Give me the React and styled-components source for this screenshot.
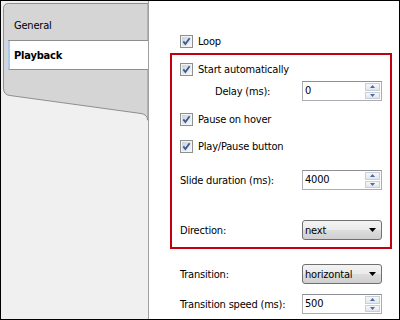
import React from 'react';
import styled, { createGlobalStyle } from 'styled-components';

const Global = createGlobalStyle`
  body {
    margin: 0;
    background: #fff;
  }
`;

const Frame = styled.div`
  width: 400px;
  height: 320px;
  box-sizing: border-box;
  border: 1px solid #000;
  display: flex;
  overflow: hidden;
  font-family: "DejaVu Sans Condensed", "Liberation Sans", sans-serif;
  font-size: 11px;
  letter-spacing: -0.2px;
  color: #000;
`;

/* left side: the tab strip */
const Sidebar = styled.div`
  position: relative;
  width: 147px;
  flex: none;
  background: #f0f0f0;
  border-right: 1px solid #a0a0a0;
  padding-top: 3px;
`;

const Backdrop = styled.svg`
  position: absolute;
  left: 0;
  top: 0;
`;

const TabList = styled.div`
  position: relative;
  margin-left: 7px;
`;

const Tab = styled.div`
  display: flex;
  align-items: center;
  box-sizing: border-box;
  height: ${(p) => (p.$active ? 29 : 37)}px;
  padding: ${(p) => (p.$active ? '0 0 0 4px' : '7px 0 0 6px')};
  border-bottom: 1px solid #8e8e8e;
  border-left: ${(p) => (p.$active ? '2px solid #a6cbf2' : 'none')};
  background: ${(p) => (p.$active ? '#fff' : 'transparent')};
  font-weight: ${(p) => (p.$active ? 'bold' : 'normal')};
  line-height: 13px;
`;

/* right side: the settings */
const Content = styled.div`
  flex: 1;
  background: #fff;
  padding: 30px 0 0 21px;
`;

const Row = styled.div`
  display: flex;
  align-items: center;
  height: 20px;
  margin-top: ${(p) => p.$gap || 0}px;
  padding-left: ${(p) => (p.$outside ? 10 : 0)}px;
`;

const Highlight = styled.div`
  box-sizing: border-box;
  width: 222px;
  margin-top: 2px;
  border: 2px solid #c3000d;
  padding: 4px 0 7px 8px;
`;

const Label = styled.span`
  width: ${(p) => (p.$indent ? 87 : 122)}px;
  padding-left: ${(p) => (p.$indent ? 35 : 0)}px;
  white-space: nowrap;
`;

const CheckLabel = styled.label`
  display: flex;
  align-items: center;
  gap: 5px;
  white-space: nowrap;
`;

const Spin = styled.div`
  box-sizing: border-box;
  width: 80px;
  height: 20px;
  display: flex;
  border: 1px solid #abadb3;
  border-top-color: #8c8f96;
  background: #fff;
`;

const SpinValue = styled.span`
  flex: 1;
  padding-left: 2px;
  line-height: 18px;
`;

const SpinButtons = styled.div`
  width: 15px;
  display: flex;
  flex-direction: column;
  gap: 1px;
  padding: 1px 1px 1px 0;
`;

const SpinButton = styled.div`
  flex: 1;
  display: flex;
  align-items: center;
  justify-content: center;
  box-sizing: border-box;
  border: 1px solid #c9cfd7;
  background: linear-gradient(#f6f7f9, #e2e6ec);
`;

const Select = styled.div`
  box-sizing: border-box;
  width: 80px;
  height: 20px;
  display: flex;
  align-items: center;
  justify-content: space-between;
  padding: 0 5px 0 2px;
  border: 1px solid #707070;
  border-radius: 3px;
  background: linear-gradient(#f3f3f3 0%, #ebebeb 50%, #dddddd 51%, #cfcfcf 100%);
`;

const CheckBox = () => (
  <svg width="13" height="13" viewBox="0 0 13 13">
    <defs>
      <linearGradient id="cbg" x1="0" y1="0" x2="1" y2="1">
        <stop offset="0" stopColor="#cbd2da" />
        <stop offset="1" stopColor="#f7f8f9" />
      </linearGradient>
    </defs>
    <rect x="0.5" y="0.5" width="12" height="12" fill="#f4f4f4" stroke="#8e8f8f" />
    <rect x="2" y="2" width="9" height="9" fill="url(#cbg)" />
    <path d="M3.3 6.4 L5.4 9 L9.6 3.2" fill="none" stroke="#3b5998" strokeWidth="1.8" />
  </svg>
);

const Check = ({ children, gap }) => (
  <Row $gap={gap}>
    <CheckLabel>
      <CheckBox />
      {children}
    </CheckLabel>
  </Row>
);

const Arrow = ({ up }) => (
  <svg width="5" height="3" viewBox="0 0 5 3">
    <polygon points={up ? '0,3 5,3 2.5,0' : '0,0 5,0 2.5,3'} fill="#4a6aa5" />
  </svg>
);

const Spinner = ({ value }) => (
  <Spin>
    <SpinValue>{value}</SpinValue>
    <SpinButtons>
      <SpinButton><Arrow up /></SpinButton>
      <SpinButton><Arrow /></SpinButton>
    </SpinButtons>
  </Spin>
);

const Dropdown = ({ value }) => (
  <Select>
    <span>{value}</span>
    <svg width="7" height="4" viewBox="0 0 7 4">
      <polygon points="0,0 7,0 3.5,4" fill="#000" />
    </svg>
  </Select>
);

export default function App() {
  return (
    <>
      <Global />
      <Frame>
        <Sidebar>
          <Backdrop width="147" height="125" viewBox="0 0 147 125">
            <path
              d="M147 2.5 L7.5 2.5 Q2.5 2.5 2.5 7.5 L2.5 87 Q2.5 94 9 94.5 L140 112.5 Q146.5 113.5 146.5 119 L147 119 Z"
              fill="#d5d5d5"
              stroke="#8f8f8f"
            />
          </Backdrop>
          <TabList>
            <Tab>General</Tab>
            <Tab $active>Playback</Tab>
          </TabList>
        </Sidebar>
        <Content>
          <Row $outside>
            <CheckLabel>
              <CheckBox />
              Loop
            </CheckLabel>
          </Row>
          <Highlight>
            <Check>Start automatically</Check>
            <Row $gap={2}>
              <Label $indent>Delay (ms):</Label>
              <Spinner value="0" />
            </Row>
            <Check gap={8}>Pause on hover</Check>
            <Check gap={7}>Play/Pause button</Check>
            <Row $gap={14}>
              <Label>Slide duration (ms):</Label>
              <Spinner value="4000" />
            </Row>
            <Row $gap={30}>
              <Label>Direction:</Label>
              <Dropdown value="next" />
            </Row>
          </Highlight>
          <Row $outside $gap={15}>
            <Label>Transition:</Label>
            <Dropdown value="horizontal" />
          </Row>
          <Row $outside $gap={10}>
            <Label>Transition speed (ms):</Label>
            <Spinner value="500" />
          </Row>
        </Content>
      </Frame>
    </>
  );
}
